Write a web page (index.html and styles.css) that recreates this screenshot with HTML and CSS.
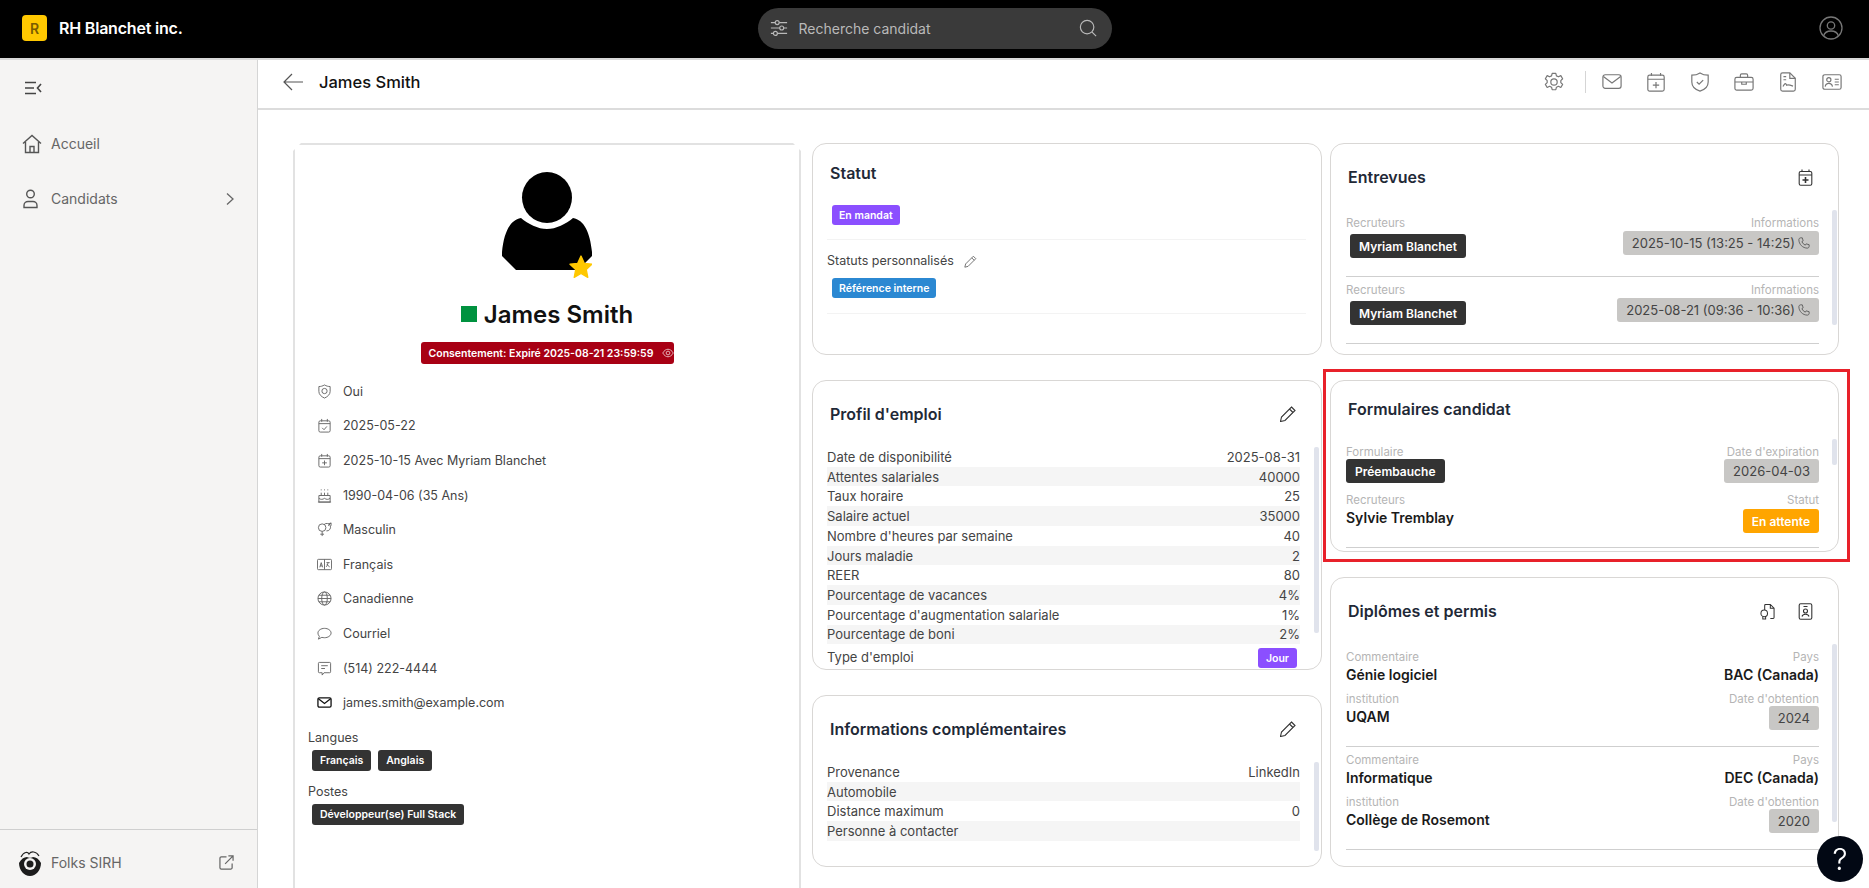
FILE: index.html
```html
<!DOCTYPE html>
<html lang="fr">

<head>
  <meta charset="UTF-8" />
  <meta name="viewport" content="width=device-width, initial-scale=1.0" />
  <title>James Smith - RH Blanchet inc.</title>
  <link rel="stylesheet" href="styles.css">
</head>

<body>
  <header class="topbar">
    <div class="brand">
      <span class="brand-logo">R</span>
      <span class="brand-name">RH Blanchet inc.</span>
    </div>
    <div class="search">
      <svg class="icon-search" viewBox="0 0 20 20"><path d="M1 4h18M1 10h18M1 16h18"/><circle cx="8" cy="4" r="2.2" fill="#3a3a3a"/><circle cx="13" cy="10" r="2.2" fill="#3a3a3a"/><circle cx="6" cy="16" r="2.2" fill="#3a3a3a"/></svg>
      <span class="search-text">Recherche candidat</span>
      <svg class="icon-search" viewBox="0 0 20 20"><circle cx="9" cy="9" r="7.5"/><path d="M14.5 14.5 19 19"/></svg>
    </div>
    <div class="account">
      <svg class="icon-account" viewBox="0 0 24 24"><circle cx="12" cy="12" r="11"/><circle cx="12" cy="9.5" r="3.7"/><path d="M4.6 20c1-3.6 4-5 7.4-5s6.400 1.400 7.400 5"/></svg>
    </div>
  </header>

  <div class="layout">
    <aside class="sidebar">
      <div class="nav-toggle">
        <svg class="icon-toggle" viewBox="0 0 18 14"><path d="M1 1.500h11M1 7h9M1 12.500h11M17 3l-3.500 4 3.500 4"/></svg>
      </div>
      <nav class="nav">
        <a class="nav-item">
          <svg class="icon-nav" viewBox="0 0 20 20"><path d="M1 9.500 10 1.500l9 8M3.500 8v10.500h13V8M8 18.500v-6h4v6"/></svg>
          <span>Accueil</span>
        </a>
        <a class="nav-item">
          <svg class="icon-nav" viewBox="0 0 20 20"><circle cx="8.500" cy="5" r="3.800"/><path d="M2 18.500v-2c0-2.500 2-4 4-4h5c2 0 4 1.500 4 4v2z"/></svg>
          <span>Candidats</span>
          <svg class="icon-chevron" viewBox="0 0 8 12"><path d="M1 .5 7 6l-6 5.500"/></svg>
        </a>
      </nav>
      <div class="sidebar-foot">
        <svg class="folks-logo" viewBox="0 0 24 26"><path d="M3 7C6 1 10 2 11 4c2-3 7-3 10 2" fill="none" stroke="#222" stroke-width="1.200"/><path d="M1 13c2-4 5-6 8-6 1 1 5 1 6 0 3 0 6 2 8 6 0 7-5 13-11 13S1 20 1 13z" fill="#1c1c1c"/><circle cx="12" cy="14" r="6" fill="#f5f4f3"/><circle cx="12" cy="14" r="3.500" fill="#1c1c1c"/></svg>
        <span class="foot-text">Folks SIRH</span>
        <svg class="icon-external" viewBox="0 0 16 16"><path d="M8 2H2.500A1.500 1.500 0 0 0 1 3.500v10A1.500 1.500 0 0 0 2.500 15h10a1.500 1.500 0 0 0 1.500-1.500V9M6.500 9.500 15 1M10 1h5v5"/></svg>
      </div>
    </aside>

    <main class="content">
      <div class="page-head">
        <svg class="icon-back" viewBox="0 0 20 18"><path d="M20 9H1M9 1 1 9l8 8"/></svg>
        <h1 class="page-title">James Smith</h1>
        <div class="toolbar">
          <svg class="tool" viewBox="0 0 22 22"><path d="M9 1.500h4l.7 2.800 2.200 1 2.600-1.300 2 3.400-2 2v2.200l2 2-2 3.400-2.600-1.300-2.200 1-.7 2.800H9l-.7-2.800-2.200-1-2.600 1.300-2-3.400 2-2V9.400l-2-2 2-3.400 2.600 1.300 2.200-1z" stroke-linejoin="round"/><circle cx="11" cy="11" r="3.500"/></svg>
          <span class="tool-divider"></span>
          <svg class="tool tool-first" viewBox="0 0 22 18"><rect x="1" y="1" width="20" height="15" rx="2.500"/><path d="m1.500 3 9.500 7 9.500-7"/></svg>
          <svg class="tool" viewBox="0 0 20 22"><rect x="1" y="3.500" width="18" height="17.500" rx="2"/><path d="M1 8h18M5 1v3M15 1v3M10 11v7M6.500 14.500h7"/></svg>
          <svg class="tool" viewBox="0 0 22 22"><path d="M11 1c3 2 5.500 2.500 9 2.500V11c0 5-4 8.500-9 10-5-1.500-9-5-9-10V3.500c3.500 0 6-.5 9-2.500z"/><path d="m7.500 11 2.500 2.500 4.500-4.500"/></svg>
          <svg class="tool" viewBox="0 0 22 20"><rect x="1" y="5" width="20" height="14" rx="2"/><path d="M7 5V2.500A1.500 1.500 0 0 1 8.500 1h5A1.500 1.500 0 0 1 15 2.500V5M1 10h20M8.500 10v2.500h5V10"/></svg>
          <svg class="tool" viewBox="0 0 18 22"><path d="M11 1H3a2 2 0 0 0-2 2v16a2 2 0 0 0 2 2h12a2 2 0 0 0 2-2V7z"/><path d="M11 1v6h6M4 5h3M4 8.500h3M3.500 16c2-4 3-4 4-1.500 1.500-1 3-.5 7 1"/></svg>
          <svg class="tool" viewBox="0 0 22 18"><rect x="1" y="1" width="20" height="16" rx="2"/><circle cx="7.500" cy="6.500" r="2.300"/><path d="M3.500 14c.5-3 2-3.500 4-3.500s3.500.5 4 3.500M14 6h4.500M14 9h4.500M14 12h4.500"/></svg>
        </div>
      </div>

      <div class="columns">
        <section class="col col-profile">
          <div class="profile">
            <svg class="avatar" viewBox="0 0 90 110"><ellipse cx="45" cy="25.500" rx="25" ry="25.500"/><path d="M19 46c7 6 17 11 26 11s19-5 26-11c11 2 17 14 19 34v4L76 98H14L0 84v-4c2-20 8-32 19-34z"/><path d="m79 84 3.300 7.300 7.700.9-5.700 5.300 1.500 7.900-6.800-3.900-6.800 3.900 1.500-7.900-5.700-5.300 7.700-.9z" fill="#ffc800" stroke="#ffc800" stroke-linejoin="round"/></svg>
            <div class="profile-name"><span class="presence"></span>James Smith</div>
            <div class="consent">
              Consentement: Expiré 2025-08-21 23:59:59
              <svg class="icon-eye" viewBox="0 0 16 12"><path d="M1 6c2-3.500 4.500-5 7-5s5 1.500 7 5c-2 3.500-4.500 5-7 5S3 9.500 1 6z"/><circle cx="8" cy="6" r="2.500"/></svg>
            </div>
            <ul class="facts">
              <li class="fact"><svg class="fact-icon" viewBox="0 0 16 16"><path d="M8 1c2 1.200 4 1.700 6 1.700V8c0 3-2.500 5.500-6 7-3.500-1.500-6-4-6-7V2.700C4 2.700 6 2.200 8 1z"/><circle cx="8" cy="7.500" r="2.800"/></svg>Oui</li>
              <li class="fact"><svg class="fact-icon" viewBox="0 0 16 16"><rect x="2" y="3" width="12" height="12" rx="1.500"/><path d="M2 6h12M5 1v3M11 1v3M5.500 10.500 7.500 12.500l3-3.500"/></svg>2025-05-22</li>
              <li class="fact"><svg class="fact-icon" viewBox="0 0 16 16"><rect x="2" y="3" width="12" height="12" rx="1.500"/><path d="M2 6h12M5 1v3M11 1v3M8 8v5M5.500 10.500h5"/></svg>2025-10-15 Avec Myriam Blanchet</li>
              <li class="fact"><svg class="fact-icon" viewBox="0 0 16 16"><path d="M2 15V8h12v7zM2 11c2 1.500 4 1.500 6 0 2 1.500 4 1.500 6 0M1 15h14M4.500 8V5M8 8V5M11.500 8V5M4.500 1.500v1M8 1.500v1M11.500 1.500v1"/></svg>1990-04-06 (35 Ans)</li>
              <li class="fact"><svg class="fact-icon" viewBox="0 0 16 16"><circle cx="5.500" cy="6" r="4"/><path d="M5.500 10v5M3.500 13h4"/><path d="M10 9.500a4 4 0 1 0-2.500-6.700M12 2l3-1M15 1v3M12 4l3-3"/></svg>Masculin</li>
              <li class="fact"><svg class="fact-icon" viewBox="0 0 16 12"><rect x=".5" y=".5" width="15" height="11" rx="1"/><path d="M8 .5v11M3 9l1.500-5L6 9M3.500 7.500h2M10 4h3.500M11.800 4c-.2 2-1 3.500-2 4.500M10.500 5.500c.8 1.500 2 2.500 3 3"/></svg>Français</li>
              <li class="fact"><svg class="fact-icon" viewBox="0 0 16 16"><circle cx="8" cy="8" r="7"/><ellipse cx="8" cy="8" rx="3" ry="7"/><path d="M1 8h14M2 4.500h12M2 11.500h12"/></svg>Canadienne</li>
              <li class="fact"><svg class="fact-icon" viewBox="0 0 16 16"><path d="M8 2.500c3.800 0 7 2.200 7 5s-3.200 5-7 5c-1 0-2-.2-2.800-.4L1.500 14l1-3C1.500 10 1 8.800 1 7.500c0-2.800 3.200-5 7-5z"/></svg>Courriel</li>
              <li class="fact"><svg class="fact-icon" viewBox="0 0 16 16"><path d="M2.500 1.500h11a1 1 0 0 1 1 1v9a1 1 0 0 1-1 1H7.500l-2 2.500v-2.500h-3a1 1 0 0 1-1-1v-9a1 1 0 0 1 1-1zM4.500 5h7M4.500 8h4"/></svg>(514) 222-4444</li>
              <li class="fact"><svg class="fact-icon fact-icon-dark" viewBox="0 0 16 12"><rect x="1" y="1" width="14" height="10" rx="1.500"/><path d="m1.500 2 6.500 5 6.500-5"/></svg>james.smith@example.com</li>
            </ul>
            <div class="tag-label">Langues</div>
            <div class="tags">
              <span class="tag">Français</span>
              <span class="tag">Anglais</span>
            </div>
            <div class="tag-label tag-label-next">Postes</div>
            <div class="tags">
              <span class="tag">Développeur(se) Full Stack</span>
            </div>
          </div>
        </section>

        <section class="col col-mid">
          <div class="card card-top">
            <h2 class="card-title title-statut">Statut</h2>
            <div class="status-block">
              <span class="pill pill-purple">En mandat</span>
            </div>
            <div class="status-label">
              Statuts personnalisés
              <svg class="icon-pencil-sm" viewBox="0 0 16 16"><path d="M11.500 1.500 14.500 4.500 5 14l-4 1 1-4zM9.500 3.500l3 3"/></svg>
            </div>
            <div class="status-block status-block-custom">
              <span class="pill pill-blue">Référence interne</span>
            </div>
          </div>

          <div class="card card-tall">
            <div class="card-head">
              <h2 class="card-title">Profil d'emploi</h2>
              <svg class="icon-pencil" viewBox="0 0 16 16"><path d="M11.500 1 15 4.500 5 14.500l-4.500 1 1-4.500zM9.500 3l3.500 3.500"/></svg>
            </div>
            <div class="rows">
              <div class="row"><span>Date de disponibilité</span><span>2025-08-31</span></div>
              <div class="row"><span>Attentes salariales</span><span>40000</span></div>
              <div class="row"><span>Taux horaire</span><span>25</span></div>
              <div class="row"><span>Salaire actuel</span><span>35000</span></div>
              <div class="row"><span>Nombre d'heures par semaine</span><span>40</span></div>
              <div class="row"><span>Jours maladie</span><span>2</span></div>
              <div class="row"><span>REER</span><span>80</span></div>
              <div class="row"><span>Pourcentage de vacances</span><span>4%</span></div>
              <div class="row"><span>Pourcentage d'augmentation salariale</span><span>1%</span></div>
              <div class="row"><span>Pourcentage de boni</span><span>2%</span></div>
              <div class="row row-type"><span>Type d'emploi</span><span class="pill pill-purple pill-job">Jour</span></div>
            </div>
            <span class="thumb thumb-profile"></span>
          </div>

          <div class="card card-short">
            <div class="card-head">
              <h2 class="card-title">Informations complémentaires</h2>
              <svg class="icon-pencil" viewBox="0 0 16 16"><path d="M11.500 1 15 4.500 5 14.500l-4.500 1 1-4.500zM9.500 3l3.500 3.500"/></svg>
            </div>
            <div class="rows">
              <div class="row"><span>Provenance</span><span>LinkedIn</span></div>
              <div class="row"><span>Automobile</span><span></span></div>
              <div class="row"><span>Distance maximum</span><span>0</span></div>
              <div class="row"><span>Personne à contacter</span><span></span></div>
            </div>
            <span class="thumb thumb-info"></span>
          </div>
        </section>

        <section class="col col-right">
          <div class="card card-top">
            <div class="card-head">
              <h2 class="card-title">Entrevues</h2>
              <svg class="icon-card" viewBox="0 0 14 17"><rect x=".7" y="2.500" width="12.600" height="13.800" rx="1.500"/><path d="M.7 6h12.600M3.500 .5v2.500M10.500 .5v2.500"/><path class="plus" d="M7 8v6M4 11h6"/></svg>
            </div>
            <div class="list">
              <div class="item item-interview">
                <div class="field">
                  <span class="label">Recruteurs</span>
                  <span class="chip chip-indent">Myriam Blanchet</span>
                </div>
                <div class="field field-end">
                  <span class="label">Informations</span>
                  <span class="chip chip-grey chip-up">2025-10-15 (13:25 - 14:25)
                    <svg class="icon-phone" viewBox="0 0 14 14"><path d="M3 1 5 1 6 4.500 4.500 5.500c.8 1.800 2.200 3.200 4 4L9.500 8 13 9v2c0 1-1 2-2 2C5.500 13 1 8.500 1 3c0-1 1-2 2-2z"/></svg>
                  </span>
                </div>
              </div>
              <div class="item item-interview">
                <div class="field">
                  <span class="label">Recruteurs</span>
                  <span class="chip chip-indent">Myriam Blanchet</span>
                </div>
                <div class="field field-end">
                  <span class="label">Informations</span>
                  <span class="chip chip-grey chip-up">2025-08-21 (09:36 - 10:36)
                    <svg class="icon-phone" viewBox="0 0 14 14"><path d="M3 1 5 1 6 4.500 4.500 5.500c.8 1.800 2.200 3.200 4 4L9.500 8 13 9v2c0 1-1 2-2 2C5.500 13 1 8.500 1 3c0-1 1-2 2-2z"/></svg>
                  </span>
                </div>
              </div>
            </div>
            <span class="thumb thumb-right thumb-interviews"></span>
          </div>

          <div class="highlight">
            <div class="card card-short">
              <div class="card-head card-head-compact">
                <h2 class="card-title">Formulaires candidat</h2>
              </div>
              <div class="list list-compact">
                <div class="item">
                  <div class="pair pair-forms">
                    <div class="field">
                      <span class="label">Formulaire</span>
                      <span class="chip">Préembauche</span>
                    </div>
                    <div class="field field-end">
                      <span class="label">Date d'expiration</span>
                      <span class="chip chip-grey">2026-04-03</span>
                    </div>
                  </div>
                  <div class="pair">
                    <div class="field">
                      <span class="label">Recruteurs</span>
                      <span class="value">Sylvie Tremblay</span>
                    </div>
                    <div class="field field-end">
                      <span class="label">Statut</span>
                      <span class="chip chip-orange">En attente</span>
                    </div>
                  </div>
                </div>
              </div>
              <span class="thumb thumb-right thumb-forms"></span>
            </div>
          </div>

          <div class="card card-tall">
            <div class="card-head">
              <h2 class="card-title">Diplômes et permis</h2>
              <div class="card-tools">
                <svg class="icon-card" viewBox="0 0 16 17"><path d="M5 1h6l4 4v10a1 1 0 0 1-1 1h-3M5 7V2a1 1 0 0 1 1-1M11 1v4h4"/><circle cx="4.500" cy="10.500" r="3.500"/><path d="M3 13.500V16.500h3v-3"/></svg>
                <svg class="icon-card" viewBox="0 0 14 17"><rect x=".7" y=".7" width="12.600" height="15.600" rx="1.500"/><path d="M5 3.500h4"/><circle cx="7" cy="8" r="2"/><path d="M3.500 13.500c.5-2 2-2.200 3.500-2.200s3 .2 3.500 2.200"/></svg>
              </div>
            </div>
            <div class="list">
              <div class="item">
                <div class="pair pair-top">
                  <div class="field">
                    <span class="label">Commentaire</span>
                    <span class="value">Génie logiciel</span>
                  </div>
                  <div class="field field-end">
                    <span class="label">Pays</span>
                    <span class="value">BAC (Canada)</span>
                  </div>
                </div>
                <div class="pair pair-bottom">
                  <div class="field">
                    <span class="label">institution</span>
                    <span class="value">UQAM</span>
                  </div>
                  <div class="field field-end">
                    <span class="label">Date d'obtention</span>
                    <span class="chip chip-grey chip-year">2024</span>
                  </div>
                </div>
              </div>
              <div class="item">
                <div class="pair pair-top">
                  <div class="field">
                    <span class="label">Commentaire</span>
                    <span class="value">Informatique</span>
                  </div>
                  <div class="field field-end">
                    <span class="label">Pays</span>
                    <span class="value">DEC (Canada)</span>
                  </div>
                </div>
                <div class="pair pair-bottom">
                  <div class="field">
                    <span class="label">institution</span>
                    <span class="value">Collège de Rosemont</span>
                  </div>
                  <div class="field field-end">
                    <span class="label">Date d'obtention</span>
                    <span class="chip chip-grey chip-year">2020</span>
                  </div>
                </div>
              </div>
            </div>
            <span class="thumb thumb-right thumb-diplomas"></span>
          </div>
        </section>
      </div>
    </main>
  </div>

  <button class="help">?</button>
</body>

</html>
```

FILE: styles.css
```css
* {
  box-sizing: border-box;
}

body {
  margin: 0;
  height: 100vh;
  overflow: hidden;
  display: flex;
  flex-direction: column;
  background-color: #fff;
  color: #444;
  font-family: Inter, 'Liberation Sans', sans-serif;
  font-size: 13px;
}

svg {
  fill: none;
  stroke: currentColor;
  stroke-width: 1.3;
  flex: none;
}

h1,
h2 {
  margin: 0;
}

/* top bar */
.topbar {
  flex: none;
  height: 60px;
  display: grid;
  grid-template-columns: 1fr 354px 1fr;
  align-items: center;
  padding-bottom: 2px;
  background-color: #000;
  border-bottom: 2px solid #d9d9d9;
}

.brand {
  display: flex;
  align-items: center;
  padding-left: 22px;
  gap: 12px;
}

.brand-logo {
  width: 25px;
  height: 26px;
  display: flex;
  align-items: center;
  justify-content: center;
  border-radius: 4px;
  background-color: #ffc800;
  color: #7a5c00;
  font-size: 14px;
  font-weight: 600;
}

.brand-name {
  color: #fff;
  font-size: 16px;
  font-weight: 600;
  letter-spacing: -0.2px;
}

.search {
  height: 41px;
  display: flex;
  align-items: center;
  gap: 11px;
  padding: 0 15px 0 12px;
  border-radius: 21px;
  background-color: #3a3a3a;
  color: #b9b9b9;
  font-size: 14px;
}

.search-text {
  flex: 1;
}

.icon-search {
  width: 18px;
  height: 18px;
}

.account {
  display: flex;
  justify-content: flex-end;
  padding-right: 26px;
  color: #777;
}

.icon-account {
  width: 24px;
  height: 24px;
}

.layout {
  flex: 1;
  min-height: 0;
  display: flex;
}

/* sidebar */
.sidebar {
  flex: none;
  width: 258px;
  display: flex;
  flex-direction: column;
  background-color: #f5f4f3;
  border-right: 1px solid #d5d5d5;
  color: #666;
  font-size: 14px;
}

.nav-toggle {
  height: 56px;
  display: flex;
  align-items: center;
  padding-left: 24px;
  color: #444;
}

.icon-toggle {
  width: 18px;
  height: 14px;
  stroke-width: 1.6;
}

.nav {
  flex: 1;
}

.nav-item {
  height: 55px;
  display: flex;
  align-items: center;
  padding: 0 23px 0 22px;
  gap: 9px;
}

.nav-item span {
  flex: 1;
}

.icon-nav {
  width: 20px;
  height: 20px;
  color: #555;
  stroke-width: 1.400;
}

.icon-chevron {
  width: 8px;
  height: 12px;
}

.sidebar-foot {
  height: 59px;
  display: flex;
  align-items: center;
  gap: 9px;
  padding: 7px 23px 0 18px;
  border-top: 1px solid #cfcfcf;
}

.folks-logo {
  width: 24px;
  height: 26px;
  stroke: none;
}

.foot-text {
  flex: 1;
}

.icon-external {
  width: 15px;
  height: 15px;
}

/* page */
.content {
  flex: 1;
  min-width: 0;
  display: flex;
  flex-direction: column;
}

.page-head {
  flex: none;
  height: 50px;
  display: flex;
  align-items: center;
  padding: 0 27px 4px 25px;
  border-bottom: 2px solid #dcdcdc;
}

.icon-back {
  width: 20px;
  height: 18px;
  color: #555;
  stroke-width: 1.200;
}

.page-title {
  flex: 1;
  margin-left: 16px;
  color: #111;
  font-size: 16.500px;
  font-weight: 500;
}

.toolbar {
  display: flex;
  align-items: center;
  gap: 24px;
  color: #777;
}

.tool {
  width: 20px;
  height: 20px;
}

.tool-divider {
  width: 1px;
  height: 22px;
  margin-left: -3px;
  background-color: #d5d5d5;
}

.tool-first {
  margin-left: -8px;
}

.columns {
  flex: 1;
  min-height: 0;
  display: flex;
  overflow: hidden;
  padding: 33px 0 0 35px;
}

.col {
  flex: none;
  display: flex;
  flex-direction: column;
  gap: 25px;
}

.col-profile {
  width: 508px;
  margin-right: 11px;
}

.col-mid {
  width: 510px;
  margin-right: 8px;
}

.col-right {
  width: 509px;
}

/* profile */
.profile {
  height: 800px;
  padding: 27px 13px 0;
  border: 2px solid #e2e2e2;
  border-bottom: none;
  clip-path: polygon(8px 0, calc(100% - 8px) 0, 100% 8px, 100% 100%, 0 100%, 0 8px);
  display: flex;
  flex-direction: column;
}

.avatar {
  width: 90px;
  height: 110px;
  align-self: center;
  margin-bottom: -12px;
  fill: #000;
  stroke: none;
}

.profile-name {
  height: 32px;
  margin-top: 28px;
  display: flex;
  align-items: center;
  justify-content: center;
  gap: 7px;
  color: #111;
  font-size: 24px;
  font-weight: 600;
}

.presence {
  width: 16px;
  height: 16px;
  background-color: #00923f;
}

.consent {
  align-self: center;
  width: 253px;
  height: 22px;
  margin-top: 12px;
  display: flex;
  align-items: center;
  padding: 0 8px;
  gap: 9px;
  border-radius: 3px;
  background-color: #a80014;
  color: #fff;
  font-size: 10.500px;
  font-weight: 600;
  white-space: nowrap;
}

.icon-eye {
  width: 12px;
  height: 10px;
  opacity: 0.7;
}

.facts {
  list-style: none;
  margin: 10px 0 0;
  padding: 0 0 0 9px;
}

.fact {
  height: 34.600px;
  display: flex;
  align-items: center;
  gap: 11px;
  font-size: 12.500px;
}

.fact-icon {
  width: 15px;
  height: 15px;
  color: #666;
  stroke-width: 1;
}

.fact-icon-dark {
  color: #111;
  stroke-width: 1.400;
}

.tag-label {
  margin-top: 9px;
  line-height: 18px;
  font-size: 12.500px;
}

.tag-label-next {
  margin-top: 12px;
}

.tags {
  display: flex;
  gap: 7px;
  margin: 3px 0 0 4px;
}

.tag {
  height: 21px;
  display: flex;
  align-items: center;
  padding: 0 8px;
  border-radius: 3px;
  background-color: #333;
  color: #fff;
  font-size: 10.500px;
  font-weight: 600;
}

/* cards */
.card {
  position: relative;
  overflow: hidden;
  flex: none;
  border: 1px solid #d9d7d5;
  border-radius: 14px;
  background-color: #fff;
}

.card-top {
  height: 212px;
}

.card-tall {
  height: 290px;
}

.card-short {
  height: 172px;
}

.card-head {
  display: flex;
  align-items: center;
  justify-content: space-between;
  padding: 23px 25px 0 17px;
}

.card-head-compact {
  padding-top: 18px;
}

.card-title {
  line-height: 20px;
  color: #1f2937;
  font-size: 16px;
  font-weight: 600;
}

.title-statut {
  padding: 19px 0 0 17px;
}

.card-tools {
  display: flex;
  gap: 23px;
}

.icon-pencil {
  width: 16px;
  height: 16px;
  color: #333;
  stroke-width: 1.100;
}

.icon-card {
  width: 15px;
  height: 17px;
  color: #333;
  stroke-width: 1.100;
}

.plus {
  stroke-width: 1.600;
}

.status-block {
  margin: 22px 15px 0 14px;
  padding: 0 5px 14px;
  border-bottom: 1px solid #f3f3f3;
}

.status-block-custom {
  margin-top: 8px;
  padding-bottom: 15px;
}

.status-label {
  margin: 12px 0 0 14px;
  display: flex;
  align-items: center;
  gap: 10px;
  line-height: 18px;
  font-size: 12.500px;
}

.icon-pencil-sm {
  width: 13px;
  height: 13px;
  color: #666;
  stroke-width: 1.100;
}

.pill {
  height: 20px;
  display: inline-flex;
  align-items: center;
  padding: 0 7px;
  border-radius: 3px;
  color: #fff;
  font-size: 10.500px;
  font-weight: 600;
}

.pill-purple {
  background-color: #8b4fff;
}

.pill-blue {
  background-color: #2b88d2;
}

/* key/value rows */
.rows {
  margin-top: 23px;
  padding: 0 21px 0 14px;
}

.row {
  height: 19.740px;
  display: flex;
  align-items: center;
  justify-content: space-between;
  font-size: 13px;
  white-space: nowrap;
}

.row:nth-child(even) {
  background-color: #f5f5f5;
}

.row-type {
  height: 26px;
  padding-right: 3px;
}

.pill-job {
  padding: 0 8px;
  margin-top: 2px;
}

/* scrollbar thumbs */
.thumb {
  position: absolute;
  width: 5px;
  border-radius: 2px;
  background-color: #e0e3ec;
  right: 2px;
}

.thumb-profile {
  top: 66px;
  height: 186px;
}

.thumb-info {
  top: 66px;
  height: 89px;
}

.thumb-right {
  right: 1px;
}

.thumb-interviews {
  top: 66px;
  height: 115px;
}

.thumb-forms {
  top: 58px;
  height: 26px;
}

.thumb-diplomas {
  top: 66px;
  height: 178px;
}

/* item lists */
.list {
  margin: 23px 19px 0 15px;
}

.list-compact {
  margin-top: 20px;
}

.item {
  padding: 6px 0 0;
  border-bottom: 1px solid #cfcfcf;
}

.item-interview {
  height: 67px;
  display: flex;
  justify-content: space-between;
}

.pair {
  display: flex;
  justify-content: space-between;
}

.pair-forms {
  margin-bottom: 10px;
}

.pair:last-child {
  padding-bottom: 14px;
}

.pair-top {
  margin-bottom: 6px;
  height: 36px;
}

.pair-bottom {
  height: 54px;
}

.pair-bottom.pair:last-child {
  padding-bottom: 0;
}

.field {
  display: flex;
  flex-direction: column;
  align-items: flex-start;
}

.field-end {
  align-items: flex-end;
}

.label {
  line-height: 14px;
  color: #b5b5b5;
  font-size: 11.500px;
}

.value {
  margin-top: 1px;
  line-height: 20px;
  color: #1a1a1a;
  font-size: 14px;
  font-weight: 600;
}

.chip {
  height: 24px;
  display: inline-flex;
  align-items: center;
  padding: 0 9px;
  border-radius: 3px;
  background-color: #333;
  color: #fff;
  font-size: 12px;
  font-weight: 600;
}

.chip-indent {
  margin: 4px 0 0 4px;
}

.chip-grey {
  gap: 3px;
  background-color: #c8c7c5;
  color: #444;
  font-size: 13px;
  font-weight: 400;
  white-space: nowrap;
}

.chip-up {
  margin-top: 1px;
}

.chip-orange {
  margin-top: 2px;
  padding: 0 9px;
  background-color: #ffa500;
}

.chip-year {
  padding: 0 9px;
}

.icon-phone {
  width: 12px;
  height: 12px;
  color: #555;
  stroke-width: 1;
}

/* annotation box */
.highlight {
  position: relative;
  flex: none;
}

.highlight::after {
  content: '';
  position: absolute;
  inset: -11px -11px -10px -7px;
  border: 3px solid #e8212a;
  pointer-events: none;
}

.help {
  position: fixed;
  right: 6px;
  bottom: 6px;
  width: 46px;
  height: 46px;
  padding: 0;
  border: none;
  border-radius: 50%;
  background-color: #020814;
  color: #fff;
  font-family: Inter, sans-serif;
  font-size: 30px;
  font-weight: 300;
}
```
